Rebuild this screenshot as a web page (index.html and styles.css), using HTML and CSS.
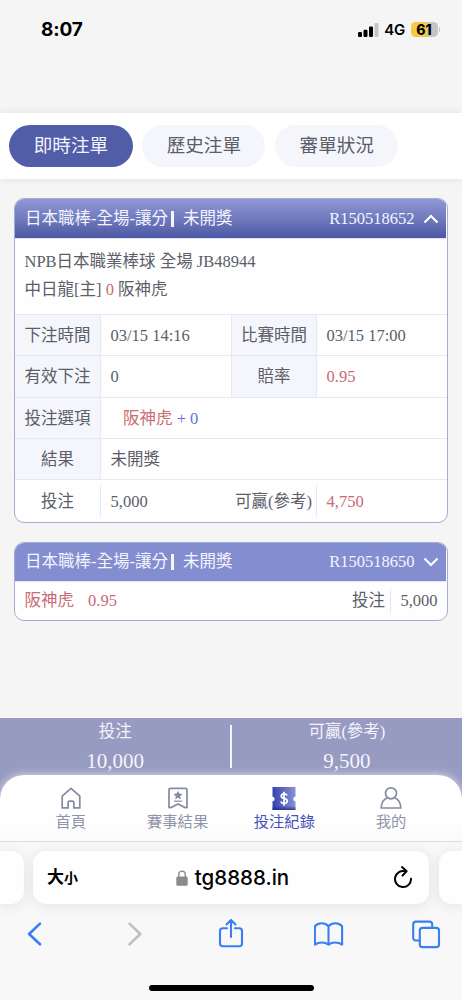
FILE: index.html
```
<!DOCTYPE html>
<html lang="zh-Hant">
<head>
<meta charset="utf-8">
<meta name="viewport" content="width=device-width, initial-scale=1">
<title>投注紀錄</title>
<link rel="stylesheet" href="styles.css">
</head>
<body>
<div class="screen">
  <header class="status">
    <span class="clock">8:07</span>
    <div class="status-right">
      <svg class="signal" width="21" height="14" viewBox="0 0 21 14"><rect x="0" y="9" width="4" height="5" rx="1.2"/><rect x="5.5" y="6.7" width="4" height="7.3" rx="1.2"/><rect x="11" y="3.5" width="4" height="10.5" rx="1.2"/><rect x="16.5" y="0" width="4" height="14" rx="1.2" fill="#c6c6c6"/></svg>
      <span class="network">4G</span>
      <span class="battery">61</span><i class="battery-tip"></i>
    </div>
  </header>

  <nav class="tabs">
    <a class="tab tab-active">即時注單</a>
    <a class="tab">歷史注單</a>
    <a class="tab">審單狀況</a>
  </nav>

  <main class="list">
    <section class="card">
      <div class="card-head card-head-open">
        <span>日本職棒-全場-讓分</span><i class="bar"></i><span>未開獎</span>
        <span class="ticket">R150518652</span>
        <svg class="chevron" width="16" height="10" viewBox="0 0 16 10"><path d="M1.500 8.500L8 2l6.500 6.500"/></svg>
      </div>
      <div class="match">
        <div>NPB日本職業棒球 全場 JB48944</div>
        <div>中日龍[主] <span class="red">0</span> 阪神虎</div>
      </div>
      <div class="grid">
        <div class="label">下注時間</div><div class="value">03/15 14:16</div>
        <div class="label label-mid">比賽時間</div><div class="value">03/15 17:00</div>
        <div class="label">有效下注</div><div class="value">0</div>
        <div class="label label-mid">賠率</div><div class="value red">0.95</div>
        <div class="label">投注選項</div><div class="value wide pick"><span class="red">阪神虎</span>&nbsp;<span class="blue">+ 0</span></div>
        <div class="label">結果</div><div class="value wide">未開獎</div>
      </div>
      <div class="total">
        <div class="total-label">投注</div><div class="total-value">5,000</div>
        <div class="total-label total-win">可贏(參考)</div><div class="total-value red">4,750</div>
      </div>
    </section>

    <section class="card">
      <div class="card-head">
        <span>日本職棒-全場-讓分</span><i class="bar"></i><span>未開獎</span>
        <span class="ticket">R150518650</span>
        <svg class="chevron" width="16" height="10" viewBox="0 0 16 10"><path d="M1.500 1.500L8 8l6.500-6.500"/></svg>
      </div>
      <div class="brief">
        <span class="red">阪神虎</span><span class="red odds">0.95</span>
        <span class="brief-label">投注</span><span class="brief-value">5,000</span>
      </div>
    </section>
  </main>

  <section class="summary">
    <div class="sum"><span>投注</span><b>10,000</b></div>
    <i class="sum-line"></i>
    <div class="sum"><span>可贏(參考)</span><b>9,500</b></div>
  </section>

  <nav class="menu">
    <a class="item">
      <svg width="24" height="24" viewBox="0 0 24 24" class="line"><path d="M3.200 10.200L12 2.400l8.800 7.800v11.600h-5.900v-5.200a1.500 1.500 0 0 0-1.500-1.500h-2.800a1.500 1.500 0 0 0-1.500 1.500v5.200H3.200z"/></svg>
      <span>首頁</span>
    </a>
    <a class="item">
      <svg width="24" height="24" viewBox="0 0 24 24" class="line"><path d="M4.300 2.300h15.400q1.300 0 1.300 1.300v17.900l-2 .1-7-3.700-7 3.700-2-.1V3.600q0-1.300 1.300-1.300z"/><path d="M8 15.200h8" stroke-width="1.200"/><path class="solid" d="M12 4.800l1.300 2.800 3.200.4-2.300 2.200.6 3.200-2.800-1.600-2.800 1.600.6-3.200L7.500 8l3.200-.4z"/></svg>
      <span>賽事結果</span>
    </a>
    <a class="item item-active">
      <svg width="24" height="24" viewBox="0 0 24 24"><defs><linearGradient id="t"><stop offset="0" stop-color="#3543ae"/><stop offset="1" stop-color="#8993d6"/></linearGradient><linearGradient id="s" x2="0" y2="1"><stop offset="0" stop-color="#18277f" stop-opacity="0"/><stop offset="1" stop-color="#18277f" stop-opacity=".8"/></linearGradient></defs><path fill="url(#t)" d="M.5 1h23v9.800a2.200 2.200 0 0 0 0 4.400V24H.5v-8.800a2.200 2.200 0 0 0 0-4.400z"/><path fill="url(#s)" d="M.5 20h23v4H.5z"/><path d="M15 9.500Q14.500 7.800 12 7.800T9.200 10q0 1.700 2.800 2.300 3.200.7 3.200 2.800 0 2.400-3.200 2.400-2.500 0-3.200-2M12 5.800v14" fill="none" stroke="#fff" stroke-width="1.700"/></svg>
      <span>投注紀錄</span>
    </a>
    <a class="item">
      <svg width="24" height="24" viewBox="0 0 24 24" class="line"><circle cx="12" cy="7.300" r="5.500"/><path d="M8.600 11.800C4.600 13.200 2.400 17 2.200 22h19.600c-.2-5-2.400-8.800-6.400-10.200"/></svg>
      <span>我的</span>
    </a>
  </nav>

  <footer class="browser">
    <div class="address-row">
      <div class="side-page side-left"></div>
      <div class="address">
        <span class="size">大<small>小</small></span>
        <span class="host"><svg width="12" height="16" viewBox="0 0 12 16"><path d="M2.800 7V4.300a3.200 3.200 0 0 1 6.400 0V7" fill="none" stroke="#8a898e" stroke-width="1.400"/><rect x=".3" y="6.500" width="11.400" height="9.300" rx="1.500" fill="#8a898e"/></svg>tg8888.in</span>
        <svg class="reload" width="20" height="24" viewBox="0 0 20 24"><path d="M12.500 5.500A8 8 0 1 0 18 12.800M9 1.100l4.600 4.200L9.500 9.600"/></svg>
      </div>
      <div class="side-page side-right"></div>
    </div>
    <div class="tools">
      <svg width="30" height="32" viewBox="0 0 30 32"><path stroke-width="2.600" d="M20 5.600L9.100 16 20 26.300"/></svg>
      <svg width="30" height="32" viewBox="0 0 30 32"><path class="off" stroke-width="2.600" d="M11.500 5.600L22.300 16 11.500 26.300"/></svg>
      <svg width="30" height="32" viewBox="0 0 30 32"><path d="M11 10.300H6.700q-2.700 0-2.700 2.700v12.600q0 2.700 2.700 2.700h16.600q2.700 0 2.700-2.700V13q0-2.700-2.700-2.700H19M15 19V2.200M10.500 6.500L15 1.900l4.500 4.600"/></svg>
      <svg width="30" height="32" viewBox="0 0 30 32"><path d="M14.500 8.200C11 4.300 4.500 4.200.9 8.200v18.500c4-3 10-3 13.600 0 3.600-3 9.600-3 13.600 0V8.200C24.500 4.200 18 4.300 14.500 8.200zM14.500 8.200v18.500"/></svg>
      <svg width="30" height="32" viewBox="0 0 30 32"><path d="M7.700 22.500H3.900Q1.200 22.500 1.200 19.800V6.300q0-2.700 2.700-2.700h13.600Q20.200 3.600 20.200 6.300v3.500"/><rect x="7.800" y="9.900" width="19.200" height="19.200" rx="2.700"/></svg>
    </div>
    <div class="home-bar"></div>
  </footer>
</div>
</body>
</html>
```
FILE: styles.css
```
* { box-sizing: border-box; }
body { margin: 0; background: #f5f5f5; }
svg { display: block; flex: none; }
i { flex: none; }
.screen {
  width: 462px; height: 1000px; overflow: hidden;
  display: flex; flex-direction: column;
  font: 16.5px/24px "Liberation Serif", "Noto Sans CJK TC", serif;
  color: #5b5e69; white-space: nowrap;
}
.red { color: #ca6a73; }
.blue { color: #6073e0; }

.status {
  height: 113px; flex: none; padding: 18px 22px 0 41px;
  display: flex; justify-content: space-between; align-items: flex-start;
  font-family: Inter, sans-serif; color: #000;
}
.clock { font-weight: 700; font-size: 19px; letter-spacing: -.1px; }
.status-right { display: flex; align-items: center; height: 23px; }
.network { font-weight: 600; font-size: 15px; margin: 1px 5.500px 0 5px; letter-spacing: -.2px; }
.battery {
  width: 27px; height: 15px; border-radius: 4.500px; text-align: center;
  background: linear-gradient(90deg, #f5cb45 61%, #c4c4c4 61%);
  font-weight: 800; font-size: 14px; line-height: 15px;
}
.battery-tip { width: 1.500px; height: 5px; margin-left: 1px; border-radius: 0 2px 2px 0; background: #c4c4c4; }

.tabs {
  height: 66px; flex: none; display: flex; align-items: center; gap: 9.600px;
  padding: 0 9.300px; background: #fff; box-shadow: 0 0 8px rgba(0,0,0,.09);
}
.tab {
  width: 123.300px; height: 42.600px; border-radius: 22px; background: #f5f6fc;
  text-align: center; line-height: 41px; font-size: 18.600px;
}
.tab-active { background: #525da7; color: #f2f3ff; }

.list { flex: 1; min-height: 0; padding: 18.500px 14px 0; display: flex; flex-direction: column; gap: 19px; }
.card {
  border: 1.400px solid #a5abd3; border-radius: 10px; background: #fefefe;
  overflow: hidden; flex: none;
}
.card-head {
  height: 39.500px; margin-right: 1px; padding: 1px 7.500px 0 10px; display: flex; align-items: center;
  background: #838ed0; color: #f4f5ff; border-bottom: 1px solid #e3e6fa;
}
.card-head-open { height: 40.500px; background: linear-gradient(#8f98d5, #6d77bb 55%, #4d58a4); }
.bar { width: 3px; height: 16px; margin: 0 9px 0 3px; background: #f4f5ff; }
.ticket { margin-left: auto; margin-right: 8px; }
.chevron path { fill: none; stroke: #fff; stroke-width: 2.200; }
.match { height: 74.800px; padding: 9px 9.500px 0; line-height: 28.300px; }
.grid { display: grid; grid-template-columns: 86px 130px 86px 1fr; grid-auto-rows: 41.400px; border-top: 1.500px solid #e4e7f6; }
.label, .value { display: flex; align-items: center; padding-top: 2px; border-bottom: 1.500px solid #e4e7f6; }
.label { justify-content: center; background: #f5f6fb; border-right: 1.500px solid #e4e7f6; }
.label-mid { border-left: 1.500px solid #e4e7f6; }
.value { padding-left: 9.500px; }
.wide { grid-column: span 3; }
.pick { padding-left: 22px; }
.total { height: 41.200px; display: grid; grid-template-columns: 86px 130px 86px 1fr; align-items: center; }
.total-label { height: 32px; line-height: 34px; text-align: center; border-right: 1.500px solid #e4e7f6; }
.total-win { text-align: right; padding-right: 4px; }
.total-value { padding: 2px 0 0 9.500px; }
.brief { height: 37.500px; padding: 0 9.500px 0 9.500px; display: flex; align-items: center; }
.odds { margin-left: 14px; }
.brief-label { margin-left: auto; padding-right: 5.500px; }
.brief-value { padding-left: 9px; border-left: 1.500px solid #e0e3fa; }

.summary {
  height: 123px; margin-bottom: -66px; padding: 0; flex: none;
  display: flex; align-items: flex-start; background: #979bc1; color: #f4f4fc;
}
.sum { flex: 1; display: flex; flex-direction: column; align-items: center; padding-top: 2px; }
.sum b { font-weight: 400; font-size: 21px; line-height: 34px; }
.sum-line { width: 1.500px; height: 43px; margin-top: 7px; background: #f5f5fa; }
.menu {
  height: 66px; flex: none; position: relative; display: flex; padding: 10.500px 17.500px 0;
  background: linear-gradient(#fff 60%, #fafafa); border-radius: 24px 24px 0 0;
  box-shadow: 0 0 8px rgba(245,240,245,.8);
}
.item { flex: 1; display: flex; flex-direction: column; align-items: center; color: #9094aa; font-size: 15.300px; line-height: 22px; gap: 1px; }
.item-active { color: #4652bc; }
.line { fill: none; stroke: #868ba3; stroke-width: 1.700; }
.line .solid { fill: #868ba3; stroke: none; }

.browser { height: 159px; flex: none; position: relative; background: #f8f8f8; border-top: 1px solid #dcdddd; overflow: hidden; }
.address-row { display: flex; gap: 9.500px; padding-top: 9px; }
.side-page, .address { height: 53px; background: #fefefe; box-shadow: 0 2px 14px rgba(0,0,0,.09); flex: none; }
.side-left { width: 23.500px; border-radius: 0 13px 13px 0; }
.side-right { width: 24px; border-radius: 13px 0 0 13px; }
.address {
  width: 396px; border-radius: 13px; display: flex; align-items: center;
  justify-content: space-between; padding: 0 16px 0 14px; color: #000;
  font-family: Inter, "Noto Sans CJK TC", sans-serif;
}
.size { font-size: 17px; font-weight: 700; width: 25px; }
.size small { font-size: 14px; }
.host { display: flex; align-items: center; gap: 7px; font-size: 20.500px; font-weight: 500; }
.reload path { fill: none; stroke: #000; stroke-width: 2; stroke-linecap: round; stroke-linejoin: round; }
.tools { display: flex; justify-content: space-between; padding: 14px 20.500px 0 19.500px; }
.tools svg { fill: none; stroke: #397ff3; stroke-width: 2.100; stroke-linecap: round; stroke-linejoin: round; }
.tools .off { stroke: #c0c0c2; }
.home-bar { width: 165px; height: 6px; border-radius: 3px; background: #000; margin: 34.500px auto 0; }
```
